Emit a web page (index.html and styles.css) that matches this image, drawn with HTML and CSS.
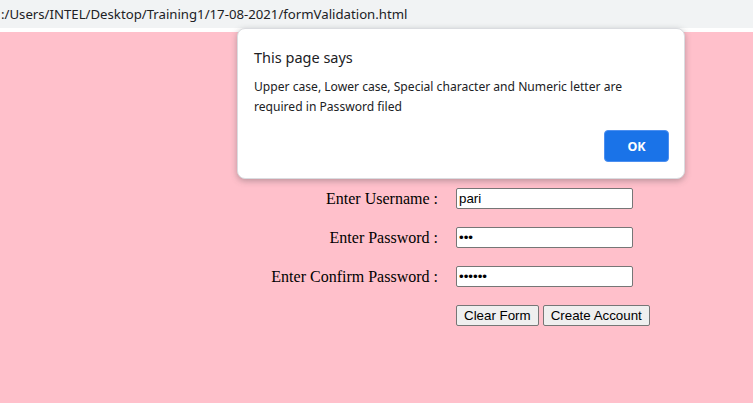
FILE: index.html
```html
<!DOCTYPE html>
<html>
<head>
<meta charset="utf-8">
<title>formValidation</title>
<link rel="stylesheet" href="styles.css">
</head>
<body>
<div class="urlbar">
  <div class="urlbar-field"><span class="url">:/Users/INTEL/Desktop/Training1/17-08-2021/formValidation.html</span></div>
</div>
<main class="page">
  <form class="signup">
    <label class="lbl" for="u">Enter Username :</label>
    <input class="field" id="u" type="text" value="pari">
    <label class="lbl" for="p">Enter Password :</label>
    <input class="field" id="p" type="password" value="abc">
    <label class="lbl" for="c">Enter Confirm Password :</label>
    <input class="field" id="c" type="password" value="abcdef">
    <span class="lbl"></span>
    <div class="actions">
      <button type="reset" class="btn">Clear Form</button>
      <button type="button" class="btn">Create Account</button>
    </div>
  </form>
</main>
<div class="dialog" role="alertdialog">
  <div class="dialog-title">This page says</div>
  <div class="dialog-msg">Upper case, Lower case, Special character and Numeric letter are required in Password filed</div>
  <div class="dialog-actions">
    <button type="button" class="ok">OK</button>
  </div>
</div>
</body>
</html>
```
FILE: styles.css
```css
html, body {
  margin: 0;
  padding: 0;
  height: 100%;
  overflow: hidden;
}
body {
  background: #ffc0cb;
  font-family: "Liberation Serif", serif;
  position: relative;
}
.urlbar {
  height: 32px;
  background: #ffffff;
  box-sizing: border-box;
}
.urlbar-field {
  height: 28px;
  background: #f1f3f4;
  overflow: hidden;
  white-space: nowrap;
  display: flex;
  align-items: center;
}
.url {
  font-family: "Noto Sans", "Open Sans", sans-serif;
  font-size: 13.2px;
  color: #202124;
  margin-left: 1px;
  margin-top: -1px;
}
.page {
  padding-top: 156px;
}
.signup {
  display: grid;
  grid-template-columns: 438px 177px;
  column-gap: 18px;
  row-gap: 18px;
  align-items: center;
}
.lbl {
  justify-self: end;
  font-size: 16px;
  color: #000;
  line-height: 21px;
}
.field {
  width: 177px;
  height: 21px;
  box-sizing: border-box;
  border: 1px solid #767676;
  border-radius: 2px;
  padding: 1px 2px;
  font-family: "Liberation Sans", Arial, sans-serif;
  font-size: 13.33px;
  background: #fff;
  color: #000;
  margin: 0;
}
.actions {
  display: flex;
  gap: 4px;
  width: 260px;
}
.btn {
  font-family: "Liberation Sans", Arial, sans-serif;
  font-size: 13.33px;
  height: 21px;
  padding: 1px 7px;
  border: 1px solid #767676;
  border-radius: 2px;
  background: #efefef;
  color: #000;
  margin: 0;
  white-space: nowrap;
}
.dialog {
  position: absolute;
  left: 237px;
  top: 28px;
  width: 448px;
  height: 151px;
  box-sizing: border-box;
  background: #fff;
  border: 1px solid #dadce0;
  border-radius: 8px;
  box-shadow: 0 2px 6px rgba(60, 64, 67, 0.35);
  padding: 18px 15px 16px 16px;
  font-family: "Noto Sans", "Open Sans", sans-serif;
  color: #202124;
}
.dialog-title {
  font-size: 14.5px;
  line-height: 20px;
}
.dialog-msg {
  font-size: 12.1px;
  line-height: 20px;
  margin-top: 10px;
  width: 400px;
}
.dialog-actions {
  display: flex;
  justify-content: flex-end;
  margin-top: 13px;
}
.ok {
  width: 65px;
  height: 32px;
  background: #1a73e8;
  color: #fff;
  border: 1px solid #4c8ff0;
  border-radius: 4px;
  font-family: "Noto Sans", "Open Sans", sans-serif;
  font-weight: bold;
  font-size: 12.5px;
}
```
